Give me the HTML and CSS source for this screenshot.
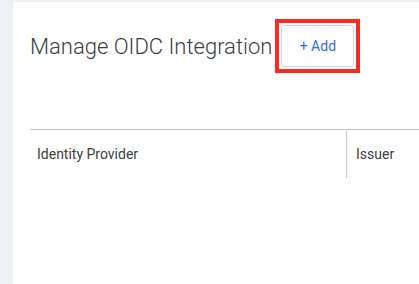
FILE: index.html
```html
<!DOCTYPE html>
<html>
<head>
<meta charset="utf-8">
<link rel="stylesheet" href="styles.css">
</head>
<body>
<div class="page">
  <div class="panel">
    <div class="header">
      <h1 class="title">Manage OIDC Integration</h1>
      <div class="highlight">
        <button class="add-btn">+ Add</button>
      </div>
    </div>
    <div class="table">
      <div class="th th-idp">Identity Provider</div>
      <div class="th th-issuer">Issuer</div>
    </div>
  </div>
</div>
</body>
</html>
```
FILE: styles.css
```css
html, body {
  margin: 0;
  padding: 0;
  background: #eef0f5;
  font-family: Roboto, "Noto Sans", sans-serif;
}
.page {
  padding: 2px 0 0 13px;
  height: 282px;
  overflow: hidden;
}
.panel {
  background: #fff;
  height: 100%;
  padding-left: 17px;
}
.header {
  display: flex;
  align-items: center;
  height: 88px;
}
.title {
  margin: 0;
  font-weight: 300;
  font-size: 22px;
  color: #3a3f44;
}
.highlight {
  margin-left: 3px;
  border: 4px solid #fb2a20;
  padding: 2px;
  display: flex;
}
.add-btn {
  width: 73px;
  height: 42px;
  border: 1px solid #d3d3d3;
  border-radius: 3px;
  background: #fff;
  color: #2f6ee8;
  font-family: Roboto, sans-serif;
  font-size: 14px;
  padding: 0;
}
.table {
  margin-top: 39px;
  border-top: 1px solid #c8c8c8;
  display: flex;
  height: 48px;
}
.th {
  font-size: 14px;
  color: #404040;
  display: flex;
  align-items: center;
  padding-left: 7px;
}
.th-idp {
  width: 309px;
  border-right: 1px solid #c8c8c8;
}
.th-issuer {
  padding-left: 9px;
}
```
